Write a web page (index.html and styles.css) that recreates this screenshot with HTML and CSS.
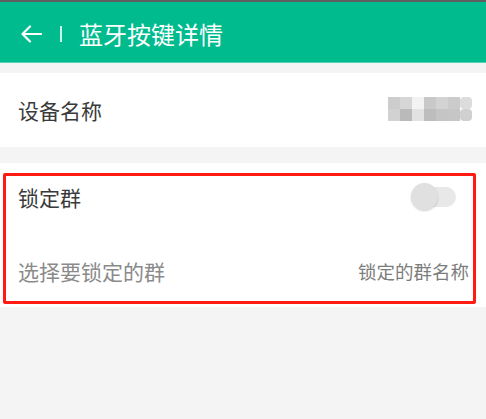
FILE: index.html
```html
<!DOCTYPE html>
<html lang="zh-CN">

<head>
    <meta charset="UTF-8">
    <meta name="viewport" content="width=device-width, initial-scale=1.0">
    <title>蓝牙按键详情</title>
    <link rel="stylesheet" href="styles.css">
</head>

<body>
    <div class="status-strip"></div>

    <header class="app-bar">
        <svg class="back-icon" width="22" height="18" viewBox="0 0 22 18">
            <path d="M21 9 H2.5 M10 1.5 L2.5 9 L10 16.5" fill="none" stroke="#fff" stroke-width="2.2"
                stroke-linecap="round" stroke-linejoin="round" />
        </svg>
        <span class="divider"></span>
        <h1 class="title">蓝牙按键详情</h1>
    </header>

    <div class="row device-row">
        <span class="label">设备名称</span>
        <!-- 打码的设备名 -->
        <svg class="mosaic" width="84" height="24" viewBox="0 0 84 24">
            <rect x="0" y="0" width="12" height="12" fill="#cdcdcd" />
            <rect x="12" y="0" width="12" height="12" fill="#d6d6d6" />
            <rect x="24" y="0" width="12" height="12" fill="#f3f3f3" />
            <rect x="36" y="0" width="12" height="12" fill="#c9c9c9" />
            <rect x="48" y="0" width="12" height="12" fill="#d3d3d3" />
            <rect x="60" y="0" width="12" height="12" fill="#cbcbcb" />
            <rect x="72" y="0" width="12" height="12" rx="4" fill="#dcdcdc" />
            <rect x="0" y="12" width="12" height="12" fill="#d2d2d2" />
            <rect x="12" y="12" width="12" height="12" fill="#bababa" />
            <rect x="24" y="12" width="12" height="12" fill="#e2e2e2" />
            <rect x="36" y="12" width="12" height="12" fill="#bdbdbd" />
            <rect x="48" y="12" width="12" height="12" fill="#c5c5c5" />
            <rect x="60" y="12" width="12" height="12" fill="#c6c6c6" />
            <rect x="72" y="12" width="12" height="12" rx="4" fill="#d0d0d0" />
        </svg>
    </div>

    <section class="lock-section">
        <div class="lock-box">
            <div class="lock-row">
                <span class="label">锁定群</span>
                <span class="switch"><span class="knob"></span></span>
            </div>
            <div class="lock-row pick-row">
                <span class="hint">选择要锁定的群</span>
                <span class="value">锁定的群名称</span>
            </div>
        </div>
    </section>
</body>

</html>
```

FILE: styles.css
```css
body {
    margin: 0;
    background-color: #f4f4f4;
    font-family: "Noto Sans CJK SC", "Noto Sans", sans-serif;
    color: #3a3a3a;
}

.status-strip {
    height: 2px;
    background-color: #5e5e5e;
}

.app-bar {
    height: 61px;
    display: flex;
    align-items: center;
    padding: 4px 0 0 20px;
    box-sizing: border-box;
    background-color: #00bb8e;
    border-bottom: 1px solid #55d0b0;
}

.back-icon {
    display: block;
}

.divider {
    width: 2px;
    height: 16px;
    margin: 0 17px 0 18px;
    background-color: rgba(255, 255, 255, 0.8);
}

.title {
    margin: 0;
    font-size: 24px;
    font-weight: normal;
    color: #fff;
    line-height: 1;
}

.row {
    display: flex;
    justify-content: space-between;
    align-items: center;
    background-color: #fff;
}

.device-row {
    height: 74px;
    margin-top: 10px;
    padding: 0 14px 0 18px;
}

.label {
    font-size: 21px;
    line-height: 1;
}

.mosaic {
    display: block;
    margin-top: -2px;
}

.lock-section {
    margin-top: 16px;
    height: 144px;
    padding: 10px 10px 0 3px;
    box-sizing: border-box;
    background-color: #fff;
}

.lock-box {
    height: 131px;
    border: 3px solid #ff1a12;
    border-radius: 2px;
    box-sizing: border-box;
    padding: 0 4px 0 12px;
}

.lock-row {
    height: 42px;
    display: flex;
    justify-content: space-between;
    align-items: center;
}

.pick-row {
    margin-top: 32px;
}

.hint {
    font-size: 21px;
    line-height: 1;
    color: #8a8a8a;
}

.value {
    font-size: 18.5px;
    line-height: 1;
    color: #7c7c7c;
}

.switch {
    position: relative;
    width: 36px;
    height: 20px;
    margin-right: 13px;
    border-radius: 10px;
    background-color: #e8e8e8;
}

.knob {
    position: absolute;
    left: -9px;
    top: -4px;
    width: 27px;
    height: 27px;
    border-radius: 50%;
    background-color: #e0e0e0;
    box-shadow: 0 1px 2px rgba(0, 0, 0, 0.18);
}
```
